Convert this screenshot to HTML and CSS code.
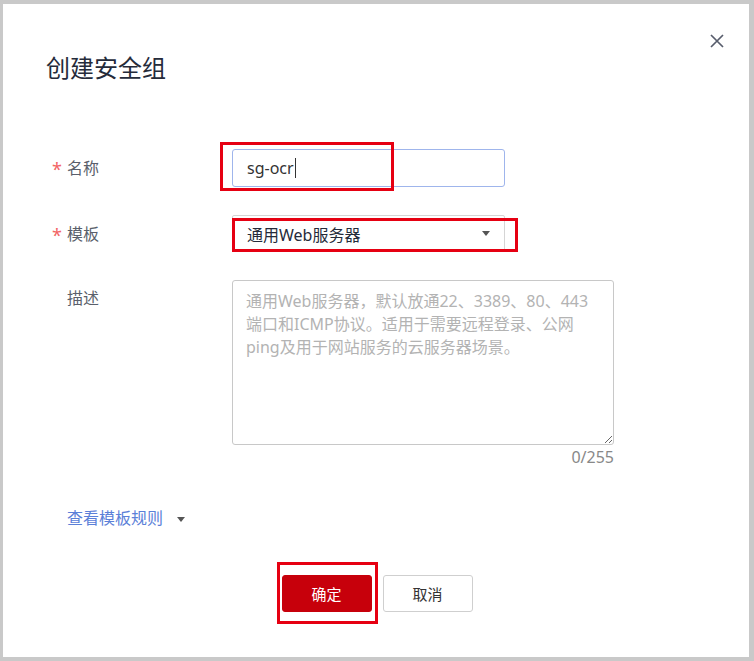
FILE: index.html
```html
<!DOCTYPE html>
<html lang="zh-CN">
<head>
    <meta charset="UTF-8">
    <meta name="viewport" content="width=device-width, initial-scale=1.0">
    <title>创建安全组</title>
    <link rel="stylesheet" href="styles.css">
</head>
<body>

    <!-- Create security group dialog -->
    <div class="dialog">
        <button class="close-btn" aria-label="关闭">
            <svg width="14" height="14" viewBox="0 0 14 14">
                <path d="M1 1 L13 13 M13 1 L1 13" stroke="#575d6c" stroke-width="1.7" fill="none"/>
            </svg>
        </button>

        <h2 class="dialog-title">创建安全组</h2>

        <div class="form">
            <div class="form-row">
                <label class="form-label required">名称</label>
                <div class="field">
                    <div class="text-input is-focused">sg-ocr<span class="caret"></span></div>
                    <span class="mark mark-name"></span>
                </div>
            </div>

            <div class="form-row">
                <label class="form-label required">模板</label>
                <div class="field">
                    <div class="select">
                        <span>通用Web服务器</span>
                        <span class="arrow"></span>
                    </div>
                    <span class="mark mark-template"></span>
                </div>
            </div>

            <div class="form-row row-top">
                <label class="form-label">描述</label>
                <div class="field">
                    <textarea class="textarea" placeholder="通用Web服务器，默认放通22、3389、80、443端口和ICMP协议。适用于需要远程登录、公网ping及用于网站服务的云服务器场景。"></textarea>
                    <div class="counter">0/255</div>
                </div>
            </div>
        </div>

        <a class="rules-link" href="#">查看模板规则 <span class="arrow"></span></a>

        <div class="dialog-footer">
            <div class="field">
                <button class="btn btn-primary">确定</button>
                <span class="mark mark-confirm"></span>
            </div>
            <button class="btn">取消</button>
        </div>
    </div>

</body>
</html>
```

FILE: styles.css
```css
html, body {
    height: 100%;
}
body {
    margin: 0;
    padding: 4px 5px 4px 3px;
    box-sizing: border-box;
    background-color: #c9c9c9;
    font-family: "Noto Sans", "Noto Sans CJK SC", sans-serif;
    color: #333;
}
.dialog {
    position: relative;
    width: 746px;
    height: 653px;
    box-sizing: border-box;
    padding-top: 48px;
    background: #fff;
}
.close-btn {
    position: absolute;
    top: 25px;
    right: 20px;
    width: 24px;
    height: 24px;
    padding: 0;
    border: none;
    background: none;
    display: flex;
    align-items: center;
    justify-content: center;
    cursor: pointer;
}
.dialog-title {
    margin: 0 0 0 43px;
    font-size: 24px;
    line-height: 32px;
    font-weight: normal;
    color: #252b3a;
}
.form {
    margin-top: 65px;
    padding-left: 47px;
}
.form-row {
    display: grid;
    grid-template-columns: 182px auto;
    align-items: center;
    margin-bottom: 28px;
}
.form-row.row-top {
    align-items: start;
    margin-bottom: 0;
}
.row-top .form-label {
    padding-top: 6px;
}
.form-label {
    font-size: 16px;
    line-height: 24px;
    color: #5a5f6b;
    padding-left: 17px;
    position: relative;
}
.form-label.required::before {
    content: "*";
    position: absolute;
    left: 2px;
    top: 1px;
    color: #f26565;
    font-size: 18px;
}
.field {
    position: relative;
}
.text-input {
    width: 273px;
    height: 38px;
    box-sizing: border-box;
    padding: 0 14px;
    border: 1px solid #d0d0d0;
    border-radius: 3px;
    font-size: 16px;
    line-height: 36px;
    color: #333;
    display: flex;
    align-items: center;
}
.text-input.is-focused {
    border-color: #9fb5ec;
}
.caret {
    display: inline-block;
    width: 1px;
    height: 20px;
    margin-left: 1px;
    background: #333;
}
.select {
    width: 273px;
    height: 37px;
    box-sizing: border-box;
    padding: 0 14px;
    border: 1px solid #d5d5d5;
    border-radius: 2px;
    display: flex;
    align-items: center;
    justify-content: space-between;
    font-size: 16px;
    color: #252b3a;
}
.arrow {
    display: inline-block;
    width: 0;
    height: 0;
    border-left: 4px solid transparent;
    border-right: 4px solid transparent;
    border-top: 5px solid #555;
}
.textarea {
    display: block;
    width: 382px;
    height: 165px;
    box-sizing: border-box;
    margin: 0;
    padding: 9px 13px;
    border: 1px solid #c8c8c8;
    border-radius: 3px;
    font-family: "Noto Sans", "Noto Sans CJK SC", sans-serif;
    font-size: 16px;
    line-height: 23px;
    color: #333;
    outline: none;
}
.textarea::placeholder {
    color: #b3b3b3;
}
.counter {
    width: 382px;
    margin-top: 2px;
    text-align: right;
    font-size: 16px;
    line-height: 20px;
    color: #888;
}
.rules-link {
    display: inline-block;
    margin: 39px 0 0 64px;
    font-size: 16px;
    line-height: 24px;
    color: #5b80d8;
    text-decoration: none;
}
.rules-link .arrow {
    margin-left: 10px;
    vertical-align: middle;
}
.dialog-footer {
    display: flex;
    justify-content: center;
    gap: 11px;
    margin-top: 45px;
    padding-left: 2px;
}
.btn {
    width: 90px;
    height: 37px;
    padding: 0;
    border: 1px solid #cfcfcf;
    border-radius: 3px;
    background: #fff;
    font-family: "Noto Sans", "Noto Sans CJK SC", sans-serif;
    font-size: 15px;
    color: #333;
    cursor: pointer;
}
.btn-primary {
    display: block;
    border-color: #c7000b;
    background: #c7000b;
    color: #fff;
}

/* red highlight frames */
.mark {
    position: absolute;
    box-sizing: border-box;
    border: 3px solid #e60012;
    pointer-events: none;
}
.mark-name {
    left: -12px;
    top: -7px;
    width: 174px;
    height: 49px;
}
.mark-template {
    left: 0;
    top: 3px;
    width: 286px;
    height: 34px;
}
.mark-confirm {
    left: -5px;
    top: -13px;
    width: 101px;
    height: 62px;
}
```
